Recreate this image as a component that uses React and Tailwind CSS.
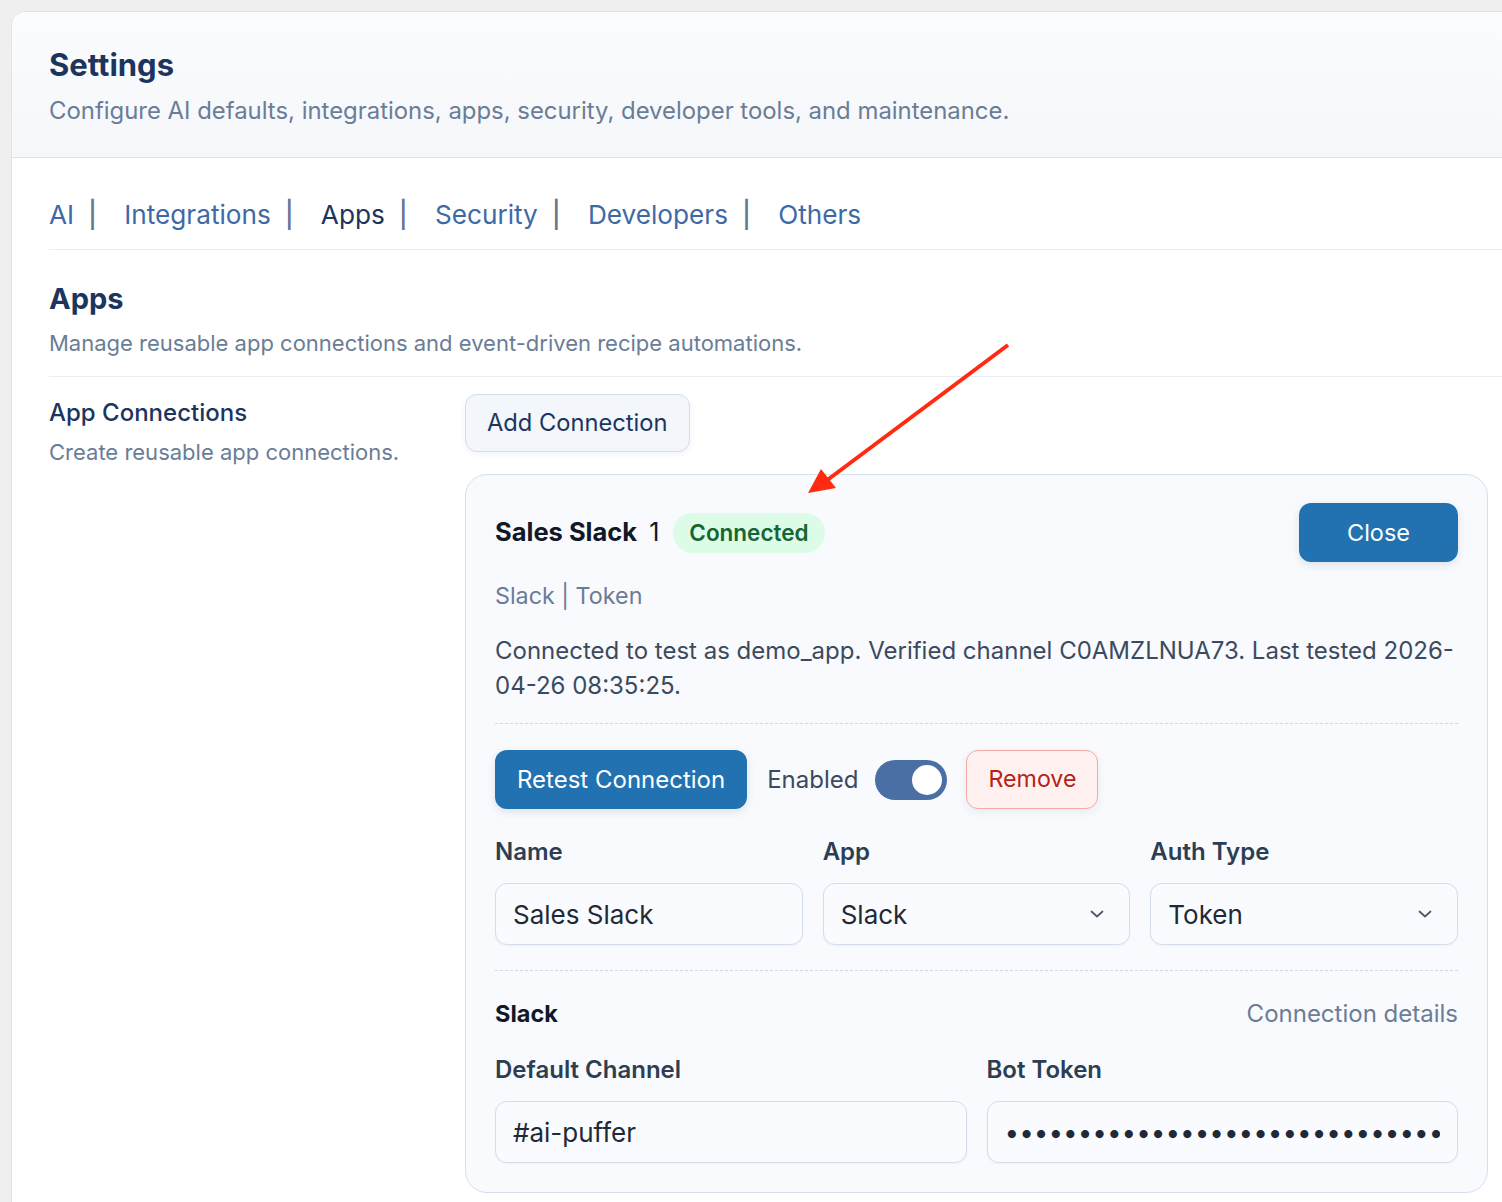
import React from 'react';

const tabs = ['AI', 'Integrations', 'Apps', 'Security', 'Developers', 'Others'];

const Chevron = () => (
  <svg width="14" height="8" viewBox="0 0 14 8" fill="none" className="pointer-events-none absolute right-[26px] top-1/2 -translate-y-1/2">
    <path d="M1.5 1.5 L7 6.5 L12.5 1.5" stroke="#4b5563" strokeWidth="1.7" strokeLinecap="round" strokeLinejoin="round" />
  </svg>
);

const inputClass =
  'w-full h-[62px] px-[17px] bg-[#f9fbfe] border border-[#d3deec] rounded-[12px] text-[26px] text-[#1f2937] outline-none shadow-[0_1px_2px_rgba(30,58,95,0.05)]';

const Field = ({ label, children }) => (
  <div className="flex flex-col">
    <label className="text-[24px] leading-[30px] font-semibold text-[#2d3e52] mb-[16px]">{label}</label>
    {children}
  </div>
);

const SelectField = ({ label, value }) => (
  <Field label={label}>
    <div className="relative">
      <select defaultValue={value} className={inputClass + ' appearance-none'}>
        <option>{value}</option>
      </select>
      <Chevron />
    </div>
  </Field>
);

export default function App() {
  return (
    <div className="relative h-[1202px] overflow-hidden bg-[#efefef] pl-[11px] pt-[11px] font-['Inter',sans-serif]">
      <div className="w-[1560px] min-h-[1300px] bg-white border border-[#dce4ee] rounded-tl-[14px] overflow-hidden">
        {/* Page header */}
        <div className="px-[37px] pt-[35px] pb-[31px] bg-gradient-to-b from-[#fbfcfe] to-[#f5f7fa] border-b border-[#dce4ee]">
          <h1 className="text-[31px] leading-[36px] font-bold text-[#1c355e]">Settings</h1>
          <p className="mt-[13px] text-[23.9px] leading-[30px] text-[#6a7d96]">
            Configure AI defaults, integrations, apps, security, developer tools, and maintenance.
          </p>
        </div>

        <div className="pl-[37px]">
          {/* Tabs */}
          <nav className="flex items-center pt-[41px] pb-[18px] border-b border-[#e8edf3] text-[26.2px] leading-[32px]">
            {tabs.map((t, i) => (
              <React.Fragment key={t}>
                <a className={t === 'Apps' ? 'text-[#1c355e]' : 'text-[#3d6aa6]'}>{t}</a>
                {i < tabs.length - 1 && <span className="ml-[14px] mr-[27px] font-medium text-[#667790]">|</span>}
              </React.Fragment>
            ))}
          </nav>

          {/* Section header */}
          <div className="pt-[31px] pb-[19px] border-b border-[#e8edf3]">
            <h2 className="text-[29px] leading-[36px] font-bold text-[#1c355e]">Apps</h2>
            <p className="mt-[12px] text-[22px] leading-[28px] text-[#6a7d96]">
              Manage reusable app connections and event-driven recipe automations.
            </p>
          </div>

          <div className="flex pt-[17px]">
            <div className="w-[416px] shrink-0 pt-[4px]">
              <h3 className="text-[24px] leading-[30px] font-medium text-[#1c355e]">App Connections</h3>
              <p className="mt-[10px] text-[22px] leading-[28px] text-[#6a7d96]">Create reusable app connections.</p>
            </div>

            <div className="w-[1023px] shrink-0">
              <button className="h-[58px] px-[21px] bg-[#f3f6fa] border border-[#d3deec] rounded-[12px] text-[23.7px] text-[#1c355e] shadow-[0_2px_6px_rgba(30,58,95,0.06)]">
                Add Connection
              </button>

              {/* Connection panel */}
              <div className="mt-[22px] bg-[#f8fafd] border border-[#d6e0ec] rounded-[22px] px-[29px] pt-[28px] pb-[29px]">
                <div className="flex items-center justify-between">
                  <div className="flex items-center">
                    <span className="text-[25.5px] font-bold text-[#111827]">Sales Slack</span>
                    <span className="ml-[12px] text-[25px] text-[#111827]">1</span>
                    <span className="ml-[14px] h-[40px] px-[16px] flex items-center rounded-full bg-[#dcfce7] text-[22.5px] font-semibold text-[#166534]">
                      Connected
                    </span>
                  </div>
                  <button className="w-[159px] h-[59px] bg-[#2271b1] rounded-[12px] text-white text-[23.5px] shadow-[0_3px_8px_rgba(30,58,95,0.12)]">
                    Close
                  </button>
                </div>

                <p className="mt-[19px] text-[23.3px] leading-[30px] text-[#6a7d96]">Slack | Token</p>
                <p className="mt-[22px] text-[24px] leading-[35px] text-[#3b4a5e]">
                  Connected to test as demo_app. Verified channel C0AMZLNUA73. Last tested 2026-04-26 08:35:25.
                </p>

                <div className="mt-[20px] border-t border-dashed border-[#cfd9e6]" />

                <div className="mt-[26px] flex items-center">
                  <button className="h-[59px] px-[22px] bg-[#2271b1] rounded-[12px] text-white text-[24px] shadow-[0_3px_8px_rgba(30,58,95,0.12)]">
                    Retest Connection
                  </button>
                  <span className="ml-[20px] text-[24px] text-[#3b4a5e]">Enabled</span>
                  <div className="ml-[17px] w-[72px] h-[40px] rounded-full bg-[#4a6fa5] flex items-center justify-end pr-[5px]">
                    <div className="w-[30px] h-[30px] rounded-full bg-white" />
                  </div>
                  <button className="ml-[19px] h-[59px] px-[21px] bg-[#fff1f0] border border-[#f5aaa6] rounded-[12px] text-[23.2px] text-[#b42318] shadow-[0_3px_8px_rgba(30,58,95,0.08)]">
                    Remove
                  </button>
                </div>

                <div className="mt-[28px] grid grid-cols-3 gap-x-[20px]">
                  <Field label="Name">
                    <input defaultValue="Sales Slack" className={inputClass} />
                  </Field>
                  <SelectField label="App" value="Slack" />
                  <SelectField label="Auth Type" value="Token" />
                </div>

                <div className="mt-[25px] border-t border-dashed border-[#cfd9e6]" />

                <div className="mt-[28px] flex items-center justify-between">
                  <span className="text-[23.5px] leading-[30px] font-bold text-[#111827]">Slack</span>
                  <span className="text-[24px] leading-[30px] text-[#6a7d96]">Connection details</span>
                </div>

                <div className="mt-[26px] grid grid-cols-2 gap-x-[20px]">
                  <Field label="Default Channel">
                    <input defaultValue="#ai-puffer" className={inputClass} />
                  </Field>
                  <Field label="Bot Token">
                    <input type="password" defaultValue="xoxb-0000000000-0000000000000-abcdefghijklmnopqrstuvwx" className={inputClass} />
                  </Field>
                </div>
              </div>
            </div>
          </div>
        </div>
      </div>

      {/* Annotation arrow */}
      <svg className="absolute left-0 top-0 pointer-events-none" width="1502" height="1202">
        <line x1="1008" y1="345" x2="826" y2="481" stroke="#ff2a10" strokeWidth="4" />
        <polygon points="808,493 821,469 836,488" fill="#ff2a10" />
      </svg>
    </div>
  );
}
